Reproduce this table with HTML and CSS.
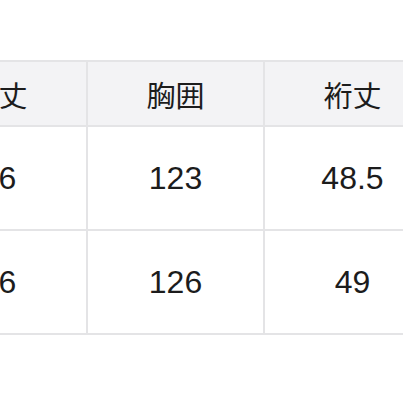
FILE: index.html
```html
<!DOCTYPE html>
<html lang="ja">
<head>
<meta charset="utf-8">
<link rel="stylesheet" href="styles.css">
</head>
<body>
<table class="size-table">
  <thead>
    <tr><th>着丈</th><th>胸囲</th><th>裄丈</th></tr>
  </thead>
  <tbody>
    <tr><td>76</td><td>123</td><td>48.5</td></tr>
    <tr><td>76</td><td>126</td><td>49</td></tr>
  </tbody>
</table>
</body>
</html>
```
FILE: styles.css
```css
html, body {
  margin: 0;
  padding: 0;
  background: #ffffff;
}
body {
  overflow: hidden;
  width: 403px;
  height: 403px;
}
.size-table {
  border-collapse: collapse;
  margin-top: 60px;
  margin-left: -91px;
  width: 531px;
  min-width: 531px;
  color: #1c1c1c;
  table-layout: fixed;
}
.size-table th,
.size-table td {
  width: 175px;
  border: 2px solid #e4e4e6;
  text-align: center;
  padding: 0;
  font-weight: 400;
}
.size-table th {
  background: #f3f3f5;
  height: 63px;
  font-family: "Noto Sans CJK JP", sans-serif;
  font-size: 29px;
}
.size-table td {
  height: 102px;
  background: #ffffff;
  font-family: "Liberation Sans", "Noto Sans CJK JP", sans-serif;
  font-size: 32px;
}
```
